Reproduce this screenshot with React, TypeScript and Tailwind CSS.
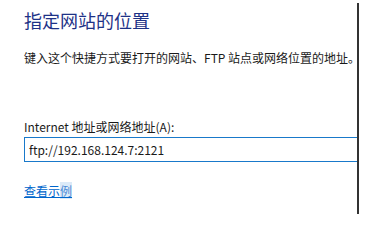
export default function App() {
  const font = { fontFamily: '"Microsoft YaHei UI", "Noto Sans CJK SC", "Noto Sans", sans-serif' };
  return (
    <div className="flex h-[217px] w-[365px] overflow-hidden bg-white" style={font}>
      {/* Content */}
      <div className="flex w-[357px] flex-col pl-6 pt-[9px]">
        <h1 className="text-[18px] leading-[22px] text-[#1e3287]">指定网站的位置</h1>
        <p className="mt-[19px] whitespace-nowrap text-[12px] leading-[16px] text-[#1a1a1a]">
          键入这个快捷方式要打开的网站、FTP 站点或网络位置的地址。
        </p>
        <label className="mt-[53px] text-[12px] leading-[16px] text-[#1a1a1a]">
          Internet 地址或网络地址(A):
        </label>
        <div className="mt-[2px] flex h-[25px] items-center border border-r-0 border-[#1979ca] pl-[4px] text-[12px] text-[#1a1a1a]">
          ftp://192.168.124.7:2121
        </div>
        <div className="mt-[15px]">
          <a className="text-[12px] leading-[16px] text-[#0066cc] underline">
            查看示<span className="bg-[#dbeaf8] text-[#4a8ad6]">例</span>
          </a>
        </div>
      </div>
      {/* Window edge */}
      <div className="my-[3px] w-[2px] bg-[#333333]" />
    </div>
  );
}
